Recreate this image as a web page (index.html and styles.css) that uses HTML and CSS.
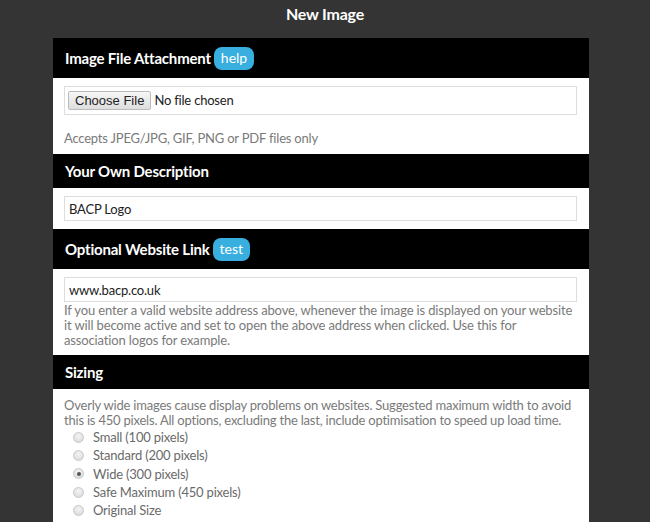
FILE: index.html
```html
<!DOCTYPE html>
<html>
<head>
<meta charset="utf-8">
<link rel="stylesheet" href="styles.css">
</head>
<body>
<h1 class="title">New Image</h1>
<div class="panel">
  <div class="head head-badge">Image File Attachment <span class="badge">help</span></div>
  <div class="body">
    <div class="filebox"><input type="file" class="file"></div>
    <p class="note note-file">Accepts JPEG/JPG, GIF, PNG or PDF files only</p>
  </div>
  <div class="head">Your Own Description</div>
  <div class="body">
    <input type="text" class="field" value="BACP Logo">
  </div>
  <div class="head head-badge">Optional Website Link <span class="badge">test</span></div>
  <div class="body body-link">
    <input type="text" class="field" value="www.bacp.co.uk">
    <p class="note note-link">If you enter a valid website address above, whenever the image is displayed on your website it will become active and set to open the above address when clicked. Use this for association logos for example.</p>
  </div>
  <div class="head">Sizing</div>
  <div class="body body-size">
    <p class="note note-size">Overly wide images cause display problems on websites. Suggested maximum width to avoid this is 450 pixels. All options, excluding the last, include optimisation to speed up load time.</p>
    <div class="radios">
      <label class="opt"><input type="radio" name="s" class="radio"><span>Small (100 pixels)</span></label>
      <label class="opt"><input type="radio" name="s" class="radio"><span>Standard (200 pixels)</span></label>
      <label class="opt"><input type="radio" name="s" class="radio" checked><span>Wide (300 pixels)</span></label>
      <label class="opt"><input type="radio" name="s" class="radio"><span>Safe Maximum (450 pixels)</span></label>
      <label class="opt"><input type="radio" name="s" class="radio"><span>Original Size</span></label>
    </div>
  </div>
</div>
</body>
</html>
```
FILE: styles.css
```css
html, body {
  margin: 0;
  padding: 0;
  background: #343434;
  font-family: Lato, "Open Sans", sans-serif;
}
.title {
  margin: 0;
  padding-top: 5px;
  font-size: 16px;
  line-height: 18px;
  font-weight: 700;
  color: #fff;
  text-align: center;
  letter-spacing: -0.2px;
}
.panel {
  margin: 15px 0 0 53px;
  width: 536px;
  background: #fff;
}
.head {
  background: #000;
  color: #fff;
  font-weight: 700;
  font-size: 15px;
  line-height: 18px;
  padding: 8px 12px;
  display: flex;
  align-items: center;
  gap: 3px;
  letter-spacing: -0.2px;
}
.head-badge {
  min-height: 24px;
}
.badge {
  display: inline-flex;
  align-items: center;
  height: 23px;
  padding: 0 7px;
  background: #39afe0;
  border-radius: 8px;
  font-weight: 400;
  font-size: 14px;
  color: #fff;
  letter-spacing: 0;
}
.body {
  padding: 8px 12px 8px 11px;
}
.filebox {
  border: 1px solid #ddd;
  height: 27px;
  display: flex;
  align-items: center;
  padding-left: 3px;
}
.file {
  font-family: Lato, sans-serif;
  font-size: 13px;
  color: #222;
  letter-spacing: -0.2px;
}
.file::file-selector-button {
  font-family: "Liberation Sans", Arial, sans-serif;
  font-size: 13px;
  letter-spacing: 0;
  padding: 1px 6px;
  margin-right: 3px;
  border: 1px solid #bbb;
  border-radius: 2px;
  background: linear-gradient(#f6f6f6, #dedede);
  color: #222;
}
.field {
  display: block;
  box-sizing: border-box;
  width: 100%;
  height: 25px;
  margin: 0;
  border: 1px solid #ddd;
  padding: 0 4px;
  font-family: Lato, sans-serif;
  font-size: 13px;
  letter-spacing: -0.2px;
  color: #222;
  outline: none;
}
.note {
  margin: 0;
  font-size: 13px;
  line-height: 15px;
  letter-spacing: -0.2px;
  color: #7a7a7a;
}
.note-file {
  margin-top: 16px;
}
.body-link {
  padding-bottom: 7px;
}
.note-link {
  margin-top: 1px;
  letter-spacing: -0.14px;
}
.note-size {
  letter-spacing: -0.21px;
}
.body-size {
  padding-top: 9px;
}
.radios {
  display: flex;
  flex-direction: column;
}
.opt {
  display: flex;
  align-items: center;
  height: 18.3px;
  font-size: 13px;
  letter-spacing: -0.2px;
  color: #6a6a6a;
}
.radio {
  appearance: none;
  -webkit-appearance: none;
  box-sizing: border-box;
  width: 11px;
  height: 11px;
  margin: 0 9px 0 9px;
  border: 1px solid #c8c8c8;
  border-radius: 50%;
  background: radial-gradient(circle at 50% 35%, #f4f4f4, #d6d6d6);
  display: grid;
  place-items: center;
}
.radio:checked::after {
  content: "";
  width: 4px;
  height: 4px;
  border-radius: 50%;
  background: #555;
}
```
